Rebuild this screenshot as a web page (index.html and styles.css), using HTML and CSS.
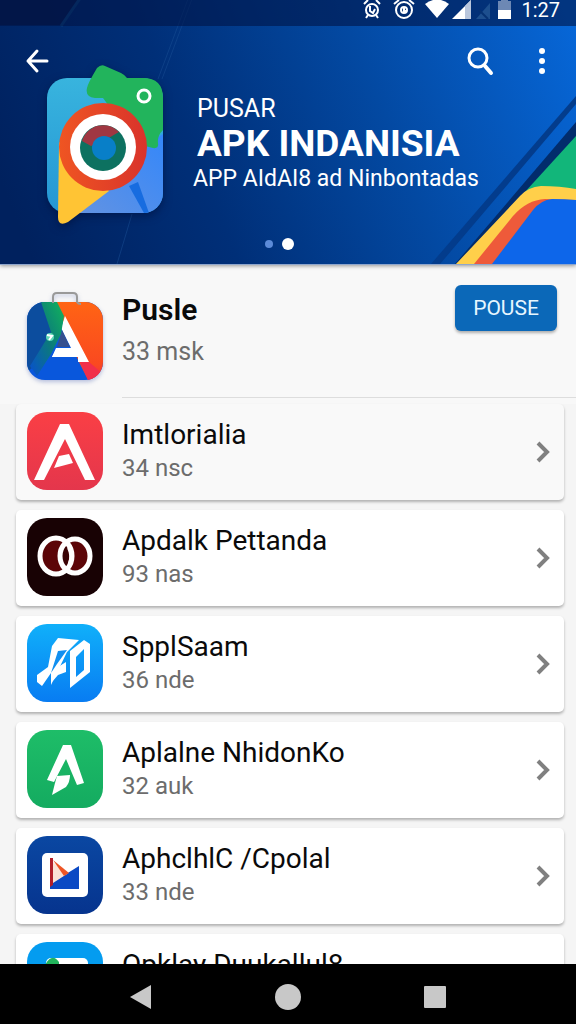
FILE: index.html
```html
<!DOCTYPE html>
<html lang="id">
<head>
  <meta charset="UTF-8" />
  <meta name="viewport" content="width=device-width, initial-scale=1.0" />
  <title>Pusar APK</title>
  <link rel="stylesheet" href="styles.css">
</head>
<body>
  <header class="hero">
    <svg class="hero-lines" viewBox="0 0 200 265" width="200" height="265" fill="none" aria-hidden="true">
      <path d="M0 0H80L61 26H0z" fill="#0a1440" opacity=".7"/>
      <path d="M81 -2L61 27" stroke="#0c4580" stroke-width="3"/>
      <path d="M192 0L162 80M132 215L117 265M188 0L158 80" stroke="#1a4f96" opacity=".5"/>
    </svg>
    <svg class="hero-art" viewBox="416 26 160 239" width="160" height="239" aria-hidden="true">
      <path d="M431 265L576 97V105L440 265z" fill="#033c8c"/>
      <path d="M455 265L576 123V139L470 265z" fill="#022c6c"/>
      <path d="M576 137L524 194H576z" fill="#12b67a"/>
      <path d="M456 265L520 197Q528 188 541 187Q560 187 576 190V265z" fill="#ffcf4a"/>
      <path d="M474 265L513 217Q527 201 545 200L576 201V265z" fill="#ee5a3a"/>
      <path d="M492 265L533 211Q541 201 552 200Q565 200 576 201V265z" fill="#0d66ea"/>
    </svg>

    <div class="status-bar">
      <svg width="32" height="20" viewBox="0 0 32 20" fill="none" stroke="#fff" stroke-width="2">
        <circle cx="16" cy="10" r="6"/>
        <path d="M8 4l4-4M24 4l-4-4M12 15l-2 3M20 15l2 3M14 6v5l3 2 2-4"/>
      </svg>
      <svg width="32" height="20" viewBox="0 0 32 20" fill="none" stroke="#fff" stroke-width="2">
        <circle cx="16" cy="10" r="8"/>
        <circle cx="16" cy="10" r="3"/>
        <path d="M6 4l5-4M26 4l-5-4M16 8v3h2"/>
      </svg>
      <svg width="32" height="20" viewBox="0 0 32 20" fill="#fff"><path d="M5 4Q17 -5 29 4L17 18z"/></svg>
      <svg width="24" height="20" viewBox="0 0 24 20"><path d="M0 19L19 0V19z" fill="#fff"/><path d="M13 6L19 0V19H13z" fill="#b9c6dc"/></svg>
      <svg width="20" height="20" viewBox="0 0 20 20"><path d="M0 19L14 3V19z" fill="#1d4f8e"/><path d="M3 10L12 19" stroke="#063272" stroke-width="2"/></svg>
      <svg width="24" height="20" viewBox="0 0 24 20"><path d="M2 1H5V0H12V1H15V10H2z" fill="#6d88b4"/><path d="M2 10H15V19H2z" fill="#fff"/></svg>
      <span class="clock">1:27</span>
    </div>

    <div class="hero-body">
      <div class="toolbar">
        <button class="icon-btn" aria-label="Kembali">
          <svg width="24" height="26" viewBox="0 0 24 26" fill="none" stroke="#fff" stroke-width="3" stroke-linecap="round" stroke-linejoin="round"><path d="M22 13H3M12 3L3 13l9 10"/></svg>
        </button>
        <button class="icon-btn search" aria-label="Cari">
          <svg width="28" height="30" viewBox="0 0 28 30" fill="none" stroke="#fff" stroke-linecap="round"><circle cx="12" cy="12" r="9" stroke-width="3"/><path d="M19 20L25 27" stroke-width="4"/></svg>
        </button>
        <button class="icon-btn" aria-label="Menu">
          <svg width="8" height="28" viewBox="0 0 8 28" fill="#fff"><circle cx="4" cy="4" r="3"/><circle cx="4" cy="14" r="3"/><circle cx="4" cy="24" r="3"/></svg>
        </button>
      </div>

      <div class="banner">
        <svg class="logo" width="116" height="160" viewBox="0 0 116 160" aria-hidden="true">
          <defs>
            <linearGradient id="card" x1="0" y1="0" x2="0" y2="1"><stop offset="0" stop-color="#38b4de"/><stop offset="1" stop-color="#2596d4"/></linearGradient>
            <linearGradient id="ring" x1="0" y1="0" x2="1" y2="0"><stop offset="0" stop-color="#ef5522"/><stop offset="1" stop-color="#d9332b"/></linearGradient>
            <linearGradient id="blue" x1="1" y1="0" x2="0" y2="1"><stop offset="0" stop-color="#3487fa"/><stop offset="1" stop-color="#6393e2"/></linearGradient>
            <clipPath id="round"><rect y="14" width="116" height="135" rx="20"/></clipPath>
          </defs>
          <g clip-path="url(#round)">
            <rect y="14" width="116" height="135" fill="url(#card)"/>
            <path d="M116 70V149H28L70 110L100 80z" fill="url(#blue)"/>
            <path d="M82 122L91 118L102 149H97z" fill="#176ce0"/>
          </g>
          <path d="M50 4Q54 0 58 2L74 9Q78 11 80 14H96Q116 14 116 34V66Q110 72 111 79Q112 85 106 84L90 80L56 34H48Q38 33 40 24Q41 19 50 4z" fill="#22b45c"/>
          <path d="M12 78L11 153Q11 163 21 158L62 127z" fill="#ffc434"/>
          <circle cx="56" cy="83" r="44" fill="url(#ring)"/>
          <circle cx="56" cy="83" r="33" fill="#fff"/>
          <circle cx="56" cy="84" r="23" fill="#0d7160"/>
          <path d="M35 77A22 22 0 0 1 72 68L58 76L44 82z" fill="#a03742"/>
          <circle cx="57" cy="84" r="12" fill="#087fc8"/>
          <circle cx="97" cy="32" r="6" fill="none" stroke="#fff" stroke-width="3"/>
        </svg>
        <div class="banner-text">
          <p class="kicker">PUSAR</p>
          <h1>APK INDANISIA</h1>
          <p class="tagline">APP AIdAI8 ad Ninbontadas</p>
        </div>
      </div>

      <div class="dots"><span></span><span class="active"></span></div>
    </div>
  </header>

  <main>
    <section class="featured">
      <svg class="app-icon tall" width="76" height="88" viewBox="0 0 76 88" aria-hidden="true">
        <defs>
          <linearGradient id="teal" x1="1" y1="0" x2="0" y2="1"><stop offset="0" stop-color="#12b45a"/><stop offset=".5" stop-color="#0b7a7c"/><stop offset="1" stop-color="#084fd0"/></linearGradient>
          <linearGradient id="orange" x1="0" y1="0" x2="0" y2="1"><stop offset="0" stop-color="#ff6414"/><stop offset=".8" stop-color="#fa4920"/><stop offset="1" stop-color="#f62a48"/></linearGradient>
          <clipPath id="fr"><rect y="10" width="76" height="78" rx="18"/></clipPath>
        </defs>
        <g clip-path="url(#fr)">
          <path d="M0 10H76V88H0z" fill="#0957dc"/>
          <path d="M0 10H15L26 38L5 76L0 80z" fill="#0c4d9e"/>
          <path d="M28 10H76V88H61L51 68z" fill="url(#orange)"/>
          <path d="M53 70H62L76 82V88H61z" fill="#f12f4b"/>
          <path d="M38 24L62 70H51V65H25L29 56H44L34 36z" fill="#fff"/>
          <path d="M35 38L43 55H30z" fill="#36508e"/>
          <path d="M14 10H30L37 24L34 42L24 62L10 84L3 74L24 40z" fill="url(#teal)"/>
          <path d="M25 65L30 56H47V65z" fill="#fff"/>
        </g>
        <circle cx="23" cy="45" r="4" fill="#5ed6b6"/><path d="M20 43l5 1-3 4" stroke="#fff" stroke-width="2" fill="none"/>
        <path d="M26 11V5Q26 1 30 1H46Q50 1 50 5V10Q51 12 54 12" fill="none" stroke="#999" stroke-width="2"/>
      </svg>
      <div class="info">
        <h2>Pusle</h2>
        <p>33 msk</p>
      </div>
      <button class="action">POUSE</button>
    </section>

    <ul class="app-list">
      <li>
        <a class="card first" href="#app1">
          <svg class="app-icon" width="76" height="78" viewBox="0 0 76 78" aria-hidden="true">
            <defs><linearGradient id="red" x1="0" y1="0" x2="0" y2="1"><stop offset="0" stop-color="#fa3f45"/><stop offset="1" stop-color="#e4364c"/></linearGradient></defs>
            <rect width="76" height="78" rx="20" fill="url(#red)"/>
            <path d="M33 12H42L68 68H58L38 27L17 68H7z" fill="#fff"/>
            <path d="M32 44L42 42L46 51L27 56z" fill="#fff"/>
          </svg>
          <div class="info"><h3>Imtlorialia</h3><p>34 nsc</p></div>
          <svg class="chevron" width="14" height="22" viewBox="0 0 14 22"><path d="M2 2L11 11L2 20"/></svg>
        </a>
      </li>
      <li>
        <a class="card" href="#app2">
          <svg class="app-icon" width="76" height="78" viewBox="0 0 76 78" aria-hidden="true">
            <rect width="76" height="78" rx="20" fill="#180204"/>
            <circle cx="29" cy="38" r="16" fill="#5c0508"/>
            <circle cx="48" cy="38" r="15" fill="#5c0508"/>
            <path d="M38 26Q46 38 38 51Q30 38 38 26z" fill="#3a0205"/>
            <g fill="none" stroke="#fff" stroke-width="5"><ellipse cx="29" cy="38" rx="16" ry="18"/><ellipse cx="48" cy="38" rx="15" ry="17"/></g>
            <path d="M40 30Q52 37 43 46L41 45Q44 38 40 30z" fill="#fff"/>
          </svg>
          <div class="info"><h3>Apdalk Pettanda</h3><p>93 nas</p></div>
          <svg class="chevron" width="14" height="22" viewBox="0 0 14 22"><path d="M2 2L11 11L2 20"/></svg>
        </a>
      </li>
      <li>
        <a class="card" href="#app3">
          <svg class="app-icon" width="76" height="78" viewBox="0 0 76 78" aria-hidden="true">
            <defs><linearGradient id="sky" x1="0" y1="0" x2="0" y2="1"><stop offset="0" stop-color="#10b0fa"/><stop offset="1" stop-color="#087cf2"/></linearGradient></defs>
            <rect width="76" height="78" rx="20" fill="url(#sky)"/>
            <path d="M31 14L52 16L40 28L24 61V49L15 62L10 58V51L21 43L25 22z" fill="#fff"/>
            <path d="M31 27L40 26L30 40L24 49z" fill="#118ff0"/>
            <path d="M25 58L31 43L39 38V48L31 51z" fill="#fff"/>
            <path d="M43 27L57 16L63 20V48L43 64zM49 33V53L57 46V25z" fill="#fff" fill-rule="evenodd"/>
          </svg>
          <div class="info"><h3>SpplSaam</h3><p>36 nde</p></div>
          <svg class="chevron" width="14" height="22" viewBox="0 0 14 22"><path d="M2 2L11 11L2 20"/></svg>
        </a>
      </li>
      <li>
        <a class="card" href="#app4">
          <svg class="app-icon" width="76" height="78" viewBox="0 0 76 78" aria-hidden="true">
            <defs><linearGradient id="green" x1="0" y1="0" x2="0" y2="1"><stop offset="0" stop-color="#1ebd68"/><stop offset="1" stop-color="#14ab60"/></linearGradient></defs>
            <rect width="76" height="78" rx="20" fill="url(#green)"/>
            <path d="M36 15H44L57 53L50 55L39 29L27 52L20 50z" fill="#fff"/>
            <path d="M30 46L43 45Q43 52 39 57L25 65L28 53z" fill="#fff"/>
          </svg>
          <div class="info"><h3>Aplalne NhidonKo</h3><p>32 auk</p></div>
          <svg class="chevron" width="14" height="22" viewBox="0 0 14 22"><path d="M2 2L11 11L2 20"/></svg>
        </a>
      </li>
      <li>
        <a class="card" href="#app5">
          <svg class="app-icon" width="76" height="78" viewBox="0 0 76 78" aria-hidden="true">
            <defs><linearGradient id="navy" x1="0" y1="0" x2="0" y2="1"><stop offset="0" stop-color="#0a47a2"/><stop offset="1" stop-color="#06348e"/></linearGradient></defs>
            <rect width="76" height="78" rx="20" fill="url(#navy)"/>
            <rect x="15" y="17" width="46" height="44" rx="5" fill="#fff"/>
            <path d="M23 53V48L52 30V53z" fill="#0a49c4"/>
            <path d="M26 26L40 38L26 47z" fill="#fbe3d6"/>
            <path d="M26 24L42 37L37 40z" fill="#ee5525"/>
            <path d="M23 22H26V49L23 51z" fill="#b3202a"/>
          </svg>
          <div class="info"><h3>AphclhlC /Cpolal</h3><p>33 nde</p></div>
          <svg class="chevron" width="14" height="22" viewBox="0 0 14 22"><path d="M2 2L11 11L2 20"/></svg>
        </a>
      </li>
      <li>
        <a class="card" href="#app6">
          <svg class="app-icon" width="76" height="78" viewBox="0 0 76 78" aria-hidden="true">
            <rect width="76" height="78" rx="20" fill="#049cf0"/>
            <rect x="19" y="16" width="42" height="44" rx="5" fill="#fff"/>
            <path d="M18 23Q25 10 32 20V40H18z" fill="#22b45c"/>
          </svg>
          <div class="info"><h3>Opklay Duukallul8</h3></div>
          <svg class="chevron" width="14" height="22" viewBox="0 0 14 22"><path d="M2 2L11 11L2 20"/></svg>
        </a>
      </li>
    </ul>
  </main>

  <nav class="nav-bar">
    <button aria-label="Kembali"><svg width="26" height="26" viewBox="0 0 26 26"><path d="M2 13L23 1V25z"/></svg></button>
    <button aria-label="Beranda"><svg width="26" height="26" viewBox="0 0 26 26"><circle cx="13" cy="13" r="13"/></svg></button>
    <button aria-label="Terbaru"><svg width="26" height="26" viewBox="0 0 26 26"><rect x="2" y="2" width="22" height="22" rx="1"/></svg></button>
  </nav>
</body>
</html>
```
FILE: styles.css
```css
* {
  box-sizing: border-box;
}
body {
  margin: 0;
  height: 100vh;
  display: flex;
  flex-direction: column;
  overflow: hidden;
  font-family: Roboto, "Liberation Sans", sans-serif;
  background-color: #f5f5f5;
  color: #0a0a0a;
}
h1, h2, h3, p, ul {
  margin: 0;
  padding: 0;
}
button {
  border: none;
  padding: 0;
  background: none;
  font-family: inherit;
  cursor: pointer;
}
svg {
  display: block;
  flex-shrink: 0;
}

/* header */
.hero {
  position: relative;
  z-index: 1;
  flex-shrink: 0;
  color: #fff;
  background: linear-gradient(68deg, #00215e 5%, #002f78 35%, #0349a2 65%, #0768da 100%);
  border-bottom: 1px solid #8fa6cc;
  box-shadow: 0 1px 4px rgba(0,0,0,0.4);
}
.hero-lines, .hero-art {
  position: absolute;
  bottom: 0;
}
.hero-lines {
  left: 0;
}
.hero-art {
  right: 0;
}
.status-bar {
  position: relative;
  height: 26px;
  padding-right: 16px;
  display: flex;
  justify-content: flex-end;
  background-color: rgba(0,20,70,0.6);
}
.clock {
  width: 40px;
  text-align: right;
  font-size: 20px;
  line-height: 20px;
}
.hero-body {
  position: relative;
  display: grid;
}
.toolbar, .banner, .dots {
  grid-area: 1 / 1;
}
.toolbar {
  z-index: 1;
  align-self: start;
  height: 70px;
  padding: 0 30px 0 25px;
  display: flex;
  align-items: center;
}
.search {
  margin-left: auto;
  margin-right: 44px;
}
.banner {
  display: flex;
  align-items: flex-start;
  gap: 30px;
  padding: 38px 0 40px 47px;
}
.logo {
  filter: drop-shadow(0 3px 4px rgba(0,10,50,0.5));
}
.banner-text {
  padding-top: 30px;
  white-space: nowrap;
}
.kicker {
  padding-left: 4px;
  font-size: 25px;
  line-height: 30px;
}
h1 {
  padding-left: 4px;
  font-size: 37px;
  line-height: 40px;
}
.tagline {
  font-size: 23px;
  line-height: 30px;
}
.dots {
  align-self: end;
  justify-self: center;
  display: flex;
  align-items: center;
  gap: 9px;
  padding-bottom: 14px;
  padding-right: 18px;
}
.dots span {
  width: 8px;
  height: 8px;
  border-radius: 50%;
  background-color: #5c8bd8;
}
.dots .active {
  width: 12px;
  height: 12px;
  background-color: #fff;
}

/* list */
main {
  flex: 1;
  min-height: 0;
  overflow: hidden;
}
.featured {
  height: 139px;
  padding: 20px 19px 0 27px;
  display: flex;
  align-items: flex-start;
  gap: 19px;
  background: linear-gradient(#ddd, #ddd) 122px 132px / 100% 1px no-repeat #f8f8f8;
}
.tall {
  margin-top: 7px;
  filter: drop-shadow(0 2px 2px rgba(30,60,160,0.3));
}
.info {
  flex: 1;
  min-width: 0;
  white-space: nowrap;
}
.featured .info {
  padding-top: 5px;
}
h2 {
  font-size: 30px;
  font-weight: 600;
  line-height: 40px;
}
.featured p {
  font-size: 25px;
  line-height: 44px;
}
.info p {
  color: #6c6c6c;
}
.action {
  width: 102px;
  height: 46px;
  border-radius: 6px;
  background-color: #0b68b8;
  color: #e6f6ff;
  font-size: 21px;
  box-shadow: 0 2px 3px rgba(0,0,0,0.3);
}
.app-list {
  list-style: none;
  padding: 0 12px 0 16px;
  display: flex;
  flex-direction: column;
  gap: 10px;
}
.card {
  height: 96px;
  padding: 8px 14px 0 11px;
  display: flex;
  align-items: flex-start;
  gap: 19px;
  border-radius: 5px;
  background-color: #fff;
  box-shadow: 0 2px 3px rgba(0,0,0,0.28);
  color: inherit;
  text-decoration: none;
}
.card.first {
  background-color: #f9f9f9;
}
.card .info {
  padding-top: 5px;
}
h3 {
  font-size: 28px;
  font-weight: 400;
  line-height: 36px;
}
.card p {
  font-size: 24px;
  line-height: 30px;
}
.chevron {
  margin-top: 29px;
}
.chevron path {
  fill: none;
  stroke: #808080;
  stroke-width: 4;
}

/* system navigation */
.nav-bar {
  position: relative;
  z-index: 1;
  flex-shrink: 0;
  height: 60px;
  padding-top: 6px;
  display: flex;
  align-items: center;
  justify-content: center;
  gap: 121px;
  background-color: #000;
}
.nav-bar svg {
  fill: #c8c8c8;
}
```
